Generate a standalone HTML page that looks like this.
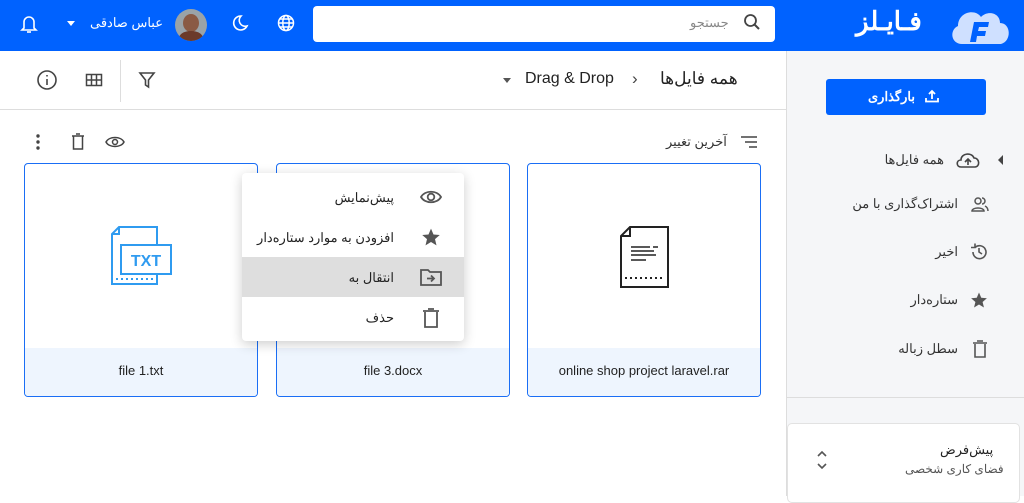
<!DOCTYPE html>
<html><head><meta charset="utf-8"><style>
*{box-sizing:border-box;margin:0;padding:0}
body{width:1024px;height:496px;overflow:hidden;background:#fff;font-family:"Liberation Sans","Noto Sans CJK SC",sans-serif;color:#222;position:relative;font-size:13px}
.a{position:absolute}
.hdr{left:0;top:0;width:1024px;height:51px;background:#0062ff}
.search{left:313px;top:6px;width:462px;height:36px;background:#fff;border-radius:4px}
.side{left:786px;top:51px;width:238px;height:445px;background:#f5f6f8;border-left:1px solid #ddd}
.card{width:234px;height:234px;border:1px solid #1a6ef5;border-radius:4px;background:#fff;overflow:hidden}
.card .ft{position:absolute;left:0;right:0;bottom:0;height:48px;background:#eef5fe;text-align:center;line-height:46px;font-size:13px;color:#222}
.menu{left:242px;top:173px;width:222px;height:168px;background:#fff;border-radius:4px;box-shadow:0 3px 12px rgba(0,0,0,.2)}
.mi{position:absolute;left:0;width:222px;height:40px;font-size:13px;direction:rtl}
.mi span{position:absolute;right:70px;top:13px}
.mi svg{position:absolute;right:22px;top:10px}
.si{position:absolute;right:66px;font-size:13px;color:#333;direction:rtl}
</style></head><body>
<div class="a hdr"></div>
<svg class="a" style="left:948px;top:6px" width="66" height="40" viewBox="0 0 66 40"><path d="M14 38 C3 38 1 24 10 20 C10 6 27 2 33 11 C40 4 52 7 52 17 C63 17 64 35 53 38 Z" fill="#cfe0ff"/><path d="M22 36 L26 16 L41 16 L40 21 L31 21 L30 25 L38 25 L37 30 L29 30 L28 36 Z" fill="#0062ff"/></svg>
<div class="a" style="left:856px;top:6px;color:#fff;font-weight:bold;font-size:26px;direction:rtl">فـایـلز</div>
<div class="a search"></div>
<div class="a" style="left:690px;top:15px;color:#888;font-size:13px">جستجو</div>
<svg class="a" style="left:743px;top:13px" width="18" height="18" viewBox="0 0 18 18"><circle cx="7.5" cy="7.5" r="5.5" fill="none" stroke="#444" stroke-width="1.8"/><path d="M11.5 11.5 L16 16" stroke="#444" stroke-width="2"/></svg>
<svg class="a" style="left:277px;top:14px" width="18" height="18" viewBox="0 0 18 18" fill="none" stroke="#fff" stroke-width="1.5"><circle cx="9" cy="9" r="7.5"/><ellipse cx="9" cy="9" rx="3.2" ry="7.5"/><path d="M1.5 9h15M3 5h12M3 13h12"/></svg>
<svg class="a" style="left:231px;top:14px" width="18" height="18" viewBox="0 0 18 18"><path d="M10 2 A7 7 0 1 0 16 12 A6 6 0 0 1 10 2Z" fill="none" stroke="#fff" stroke-width="1.6"/></svg>
<div class="a" style="left:175px;top:9px;width:32px;height:32px;border-radius:50%;background:#9aa3a8;overflow:hidden"><div style="position:absolute;left:8px;top:5px;width:16px;height:18px;border-radius:50%;background:#8a5a44"></div><div style="position:absolute;left:4px;top:22px;width:24px;height:14px;border-radius:50%;background:#6b3a2a"></div></div>
<div class="a" style="left:90px;top:15px;color:#fff;font-size:13px">عباس صادقی</div>
<div class="a" style="left:67px;top:21px;border:4px solid transparent;border-top:5px solid #fff"></div>
<svg class="a" style="left:20px;top:13px" width="18" height="22" viewBox="0 0 18 22" fill="none" stroke="#fff" stroke-width="1.6"><path d="M4 15 V9 A5 5 0 0 1 14 9 V15 L16 17 H2 Z"/><path d="M7 19 H11"/></svg>

<div class="a" style="left:0;top:109px;width:786px;height:1px;background:#ddd"></div>
<div class="a" style="left:120px;top:60px;width:1px;height:42px;background:#ddd"></div>
<div class="a" style="left:660px;top:69px;font-size:17px;direction:rtl">همه فایل‌ها</div>
<div class="a" style="left:632px;top:69px;font-size:17px;color:#444">›</div>
<div class="a" style="left:525px;top:70px;font-size:16px">Drag &amp; Drop</div>
<div class="a" style="left:503px;top:78px;border:4px solid transparent;border-top:5px solid #555"></div>
<svg class="a" style="left:138px;top:71px" width="18" height="18" viewBox="0 0 18 18"><path d="M2 2H16L10.5 9V16L7.5 14V9Z" fill="none" stroke="#444" stroke-width="1.6"/></svg>
<svg class="a" style="left:85px;top:71px" width="18" height="18" viewBox="0 0 18 18" fill="none" stroke="#444" stroke-width="1.5"><rect x="1.5" y="3.5" width="15" height="11"/><path d="M6.5 3.5v11M11.5 3.5v11M1.5 9h15"/></svg>
<svg class="a" style="left:36px;top:69px" width="22" height="22" viewBox="0 0 22 22" fill="none" stroke="#444" stroke-width="1.6"><circle cx="11" cy="11" r="9"/><path d="M11 10v6M11 6v1.5"/></svg>
<div class="a" style="left:666px;top:134px;font-size:13px;color:#333">آخرین تغییر</div>
<svg class="a" style="left:740px;top:135px" width="18" height="14" viewBox="0 0 18 14" stroke="#444" stroke-width="1.5"><path d="M1 2h16M5 7h12M9 12h8"/></svg>
<svg class="a" style="left:105px;top:135px" width="20" height="14" viewBox="0 0 20 14" fill="none" stroke="#444" stroke-width="1.5"><path d="M1 7C4 1 16 1 19 7C16 13 4 13 1 7Z"/><circle cx="10" cy="7" r="2.5"/></svg>
<svg class="a" style="left:71px;top:133px" width="14" height="18" viewBox="0 0 14 18" fill="none" stroke="#444" stroke-width="1.5"><path d="M1 3h12M5 1h4M2.5 3.5V16h9V3.5"/></svg>
<svg class="a" style="left:35px;top:133px" width="6" height="18" viewBox="0 0 6 18" fill="#444"><circle cx="3" cy="3" r="1.7"/><circle cx="3" cy="9" r="1.7"/><circle cx="3" cy="15" r="1.7"/></svg>

<div class="a card" style="left:24px;top:163px"><div class="ft">file 1.txt</div>
<svg style="position:absolute;left:84px;top:59px" width="66" height="66" viewBox="0 0 66 66" fill="none" stroke="#2f9bf0" stroke-width="2"><path d="M48 22V4H10L3 11V61H48V52"/><path d="M10 4V11H3"/><rect x="12" y="22" width="50" height="29"/><path d="M7 56h37" stroke-dasharray="2 3"/><text x="37" y="43" fill="#2f9bf0" stroke="none" font-size="16" font-weight="bold" text-anchor="middle" font-family="Liberation Sans">TXT</text></svg></div>
<div class="a card" style="left:276px;top:163px"><div class="ft">file 3.docx</div></div>
<div class="a card" style="left:527px;top:163px"><div class="ft">online shop project laravel.rar</div>
<svg style="position:absolute;left:92px;top:62px" width="52" height="62" viewBox="0 0 52 62" fill="none" stroke="#222" stroke-width="2"><path d="M10 1H48V61H1V10Z M10 1V10H1"/><path d="M11 21H30M33 21H38M11 25H34M11 29H36M11 34H26" stroke-width="1.6"/><path d="M5 52H44" stroke-dasharray="2 3"/></svg></div>

<div class="a menu">
<div class="mi" style="top:4px"><span>پیش‌نمایش</span><svg width="22" height="20" viewBox="0 0 22 20" fill="none" stroke="#555" stroke-width="1.8"><path d="M1 10C5 3 17 3 21 10C17 17 5 17 1 10Z"/><circle cx="11" cy="10" r="3.3"/></svg></div>
<div class="mi" style="top:44px"><span>افزودن به موارد ستاره‌دار</span><svg width="22" height="20" viewBox="0 0 24 24" fill="#555"><path d="M12 2l3 7 7.5.6-5.7 5 1.8 7.4L12 18l-6.6 4 1.8-7.4-5.7-5L9 9z"/></svg></div>
<div class="mi" style="top:84px;background:#dedede"><span>انتقال به</span><svg width="22" height="20" viewBox="0 0 22 20" fill="none" stroke="#555" stroke-width="1.8"><path d="M1 3H8L10 5H21V18H1Z"/><path d="M7 11.5H14M11 8.5L14 11.5L11 14.5"/></svg></div>
<div class="mi" style="top:124px"><span>حذف</span><svg width="22" height="22" viewBox="0 0 22 22" fill="none" stroke="#555" stroke-width="1.8"><path d="M3 4h16M8 2h6M5 5V20H17V5"/></svg></div>
</div>

<div class="a side"></div>
<div class="a" style="left:826px;top:79px;width:160px;height:36px;background:#0062ff;border-radius:3px"></div>
<div class="a" style="left:868px;top:89px;color:#fff;font-weight:bold;font-size:13px;direction:rtl">بارگذاری</div>
<svg class="a" style="left:925px;top:89px" width="14" height="14" viewBox="0 0 14 14" fill="none" stroke="#fff" stroke-width="1.8"><path d="M7 10V2M4 5L7 2L10 5M1 9V12.5H13V9"/></svg>
<div class="a" style="left:998px;top:155px;border:5px solid transparent;border-right:5px solid #444;border-left:none"></div>
<div class="si" style="top:152px;right:80px">همه فایل‌ها</div>
<svg class="a" style="left:955px;top:151px" width="26" height="18" viewBox="0 0 26 18" fill="none" stroke="#444" stroke-width="1.6"><path d="M6 16C1 16 1 9 6 9C6 2 17 1 19 7C25 7 25 16 20 16Z"/><path d="M13 14V8M10 11L13 8L16 11"/></svg>
<div class="si" style="top:196px">اشتراک‌گذاری با من</div>
<svg class="a" style="left:971px;top:196px" width="18" height="16" viewBox="0 0 18 16" fill="none" stroke="#555" stroke-width="1.5"><circle cx="7" cy="5" r="3"/><path d="M1 15c0-4 12-4 12 0ZM11 2a3 3 0 0 1 0 6M14 10c2 1 3 3 3 5"/></svg>
<div class="si" style="top:244px">اخیر</div>
<svg class="a" style="left:970px;top:243px" width="18" height="18" viewBox="0 0 18 18" fill="none" stroke="#555" stroke-width="1.6"><path d="M3 9A6.5 6.5 0 1 0 5 4.5M1 4.5h4v-4M9 5v4l3 2"/></svg>
<div class="si" style="top:292px">ستاره‌دار</div>
<svg class="a" style="left:970px;top:291px" width="18" height="18" viewBox="0 0 24 24" fill="#555"><path d="M12 2l3 7 7.5.6-5.7 5 1.8 7.4L12 18l-6.6 4 1.8-7.4-5.7-5L9 9z"/></svg>
<div class="si" style="top:341px">سطل زباله</div>
<svg class="a" style="left:972px;top:340px" width="16" height="18" viewBox="0 0 16 18" fill="none" stroke="#555" stroke-width="1.6"><path d="M1 3h14M5 1h6M3 4V17H13V4"/></svg>
<div class="a" style="left:787px;top:397px;width:237px;height:1px;background:#ddd"></div>
<div class="a" style="left:787px;top:423px;width:233px;height:80px;background:#fff;border:1px solid #e2e2e2;border-radius:5px"></div>
<div class="a" style="left:940px;top:442px;font-size:13px;color:#222">پیش‌فرض</div>
<div class="a" style="left:905px;top:462px;font-size:12px;color:#555;direction:rtl">فضای کاری شخصی</div>
<svg class="a" style="left:816px;top:450px" width="12" height="20" viewBox="0 0 12 20" fill="none" stroke="#555" stroke-width="1.6"><path d="M2 6L6 2L10 6M2 14L6 18L10 14"/></svg>
</body></html>
